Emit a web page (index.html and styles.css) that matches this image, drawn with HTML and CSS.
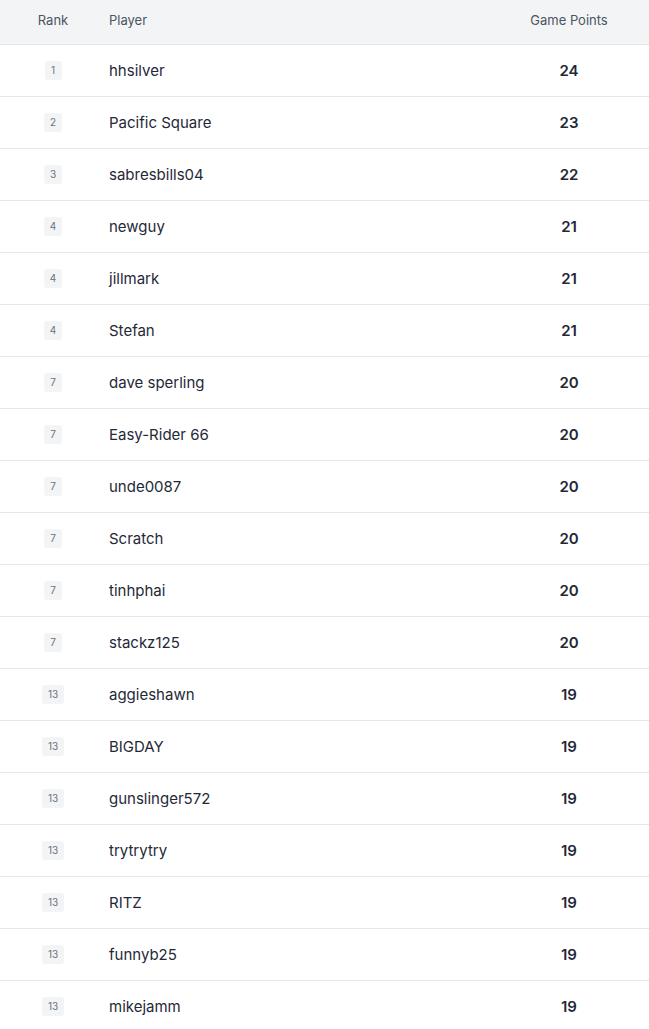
FILE: index.html
```html
<!DOCTYPE html>
<html lang="en">
<head>
  <meta charset="UTF-8">
  <title>Leaderboard</title>
  <link rel="stylesheet" href="styles.css">
</head>
<body>

  <!-- Standings -->
  <table class="board">
    <thead>
      <tr>
        <th class="col-rank">Rank</th>
        <th class="col-player">Player</th>
        <th class="col-points">Game Points</th>
      </tr>
    </thead>
    <tbody>
      <tr><td class="col-rank"><span class="badge">1</span></td><td class="col-player">hhsilver</td><td class="col-points">24</td></tr>
      <tr><td class="col-rank"><span class="badge">2</span></td><td class="col-player">Pacific Square</td><td class="col-points">23</td></tr>
      <tr><td class="col-rank"><span class="badge">3</span></td><td class="col-player">sabresbills04</td><td class="col-points">22</td></tr>
      <tr><td class="col-rank"><span class="badge">4</span></td><td class="col-player">newguy</td><td class="col-points">21</td></tr>
      <tr><td class="col-rank"><span class="badge">4</span></td><td class="col-player">jillmark</td><td class="col-points">21</td></tr>
      <tr><td class="col-rank"><span class="badge">4</span></td><td class="col-player">Stefan</td><td class="col-points">21</td></tr>
      <tr><td class="col-rank"><span class="badge">7</span></td><td class="col-player">dave sperling</td><td class="col-points">20</td></tr>
      <tr><td class="col-rank"><span class="badge">7</span></td><td class="col-player">Easy-Rider 66</td><td class="col-points">20</td></tr>
      <tr><td class="col-rank"><span class="badge">7</span></td><td class="col-player">unde0087</td><td class="col-points">20</td></tr>
      <tr><td class="col-rank"><span class="badge">7</span></td><td class="col-player">Scratch</td><td class="col-points">20</td></tr>
      <tr><td class="col-rank"><span class="badge">7</span></td><td class="col-player">tinhphai</td><td class="col-points">20</td></tr>
      <tr><td class="col-rank"><span class="badge">7</span></td><td class="col-player">stackz125</td><td class="col-points">20</td></tr>
      <tr><td class="col-rank"><span class="badge">13</span></td><td class="col-player">aggieshawn</td><td class="col-points">19</td></tr>
      <tr><td class="col-rank"><span class="badge">13</span></td><td class="col-player">BIGDAY</td><td class="col-points">19</td></tr>
      <tr><td class="col-rank"><span class="badge">13</span></td><td class="col-player">gunslinger572</td><td class="col-points">19</td></tr>
      <tr><td class="col-rank"><span class="badge">13</span></td><td class="col-player">trytrytry</td><td class="col-points">19</td></tr>
      <tr><td class="col-rank"><span class="badge">13</span></td><td class="col-player">RITZ</td><td class="col-points">19</td></tr>
      <tr><td class="col-rank"><span class="badge">13</span></td><td class="col-player">funnyb25</td><td class="col-points">19</td></tr>
      <tr><td class="col-rank"><span class="badge">13</span></td><td class="col-player">mikejamm</td><td class="col-points">19</td></tr>
    </tbody>
  </table>

</body>
</html>
```

FILE: styles.css
```css
body {
  font-family: Inter, "Noto Sans", sans-serif;
  background: white;
  margin: 0;
  color: #1f2937;
}

.board {
  width: 100%;
  border-collapse: collapse;
  table-layout: fixed;
}

.board th {
  height: 44px;
  box-sizing: border-box;
  padding: 12px 0 0;
  vertical-align: top;
  line-height: 16px;
  background: #f3f4f6;
  font-size: 13px;
  font-weight: 400;
  color: #4b5563;
  border-bottom: 1px solid #e5e7eb;
}

.board td {
  height: 50px;
  padding: 1px 0 0;
  border-bottom: 1px solid #e5e7eb;
  font-size: 15px;
  line-height: 18px;
}

.col-rank {
  width: 106px;
  text-align: center;
}

.board .col-player {
  text-align: left;
  padding-left: 3px;
}

.col-points {
  width: 160px;
  text-align: center;
  font-weight: 600;
}

.board th.col-points {
  font-weight: 400;
}

.badge {
  display: inline-block;
  min-width: 17px;
  height: 19px;
  line-height: 19px;
  padding: 0 6px;
  box-sizing: border-box;
  border-radius: 3px;
  background: #f3f4f6;
  color: #6b7280;
  font-size: 10px;
  vertical-align: middle;
}
```
